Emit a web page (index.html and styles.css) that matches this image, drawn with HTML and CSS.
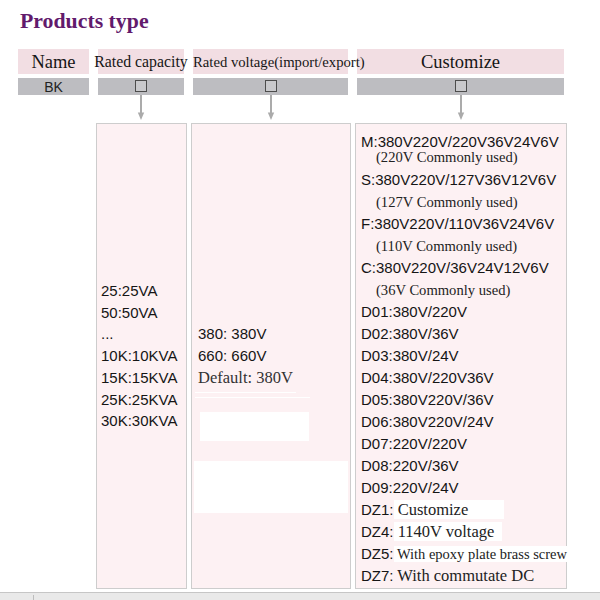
FILE: index.html
```html
<!DOCTYPE html>
<html>
<head>
<meta charset="utf-8">
<link rel="stylesheet" href="styles.css">
</head>
<body>
<div class="page">
  <h1 class="title">Products type</h1>
  <div class="table">
    <div class="hd hd-name">Name</div>
    <div class="hd hd-cap">Rated capacity</div>
    <div class="hd hd-volt">Rated voltage(import/export)</div>
    <div class="hd hd-name">Customize</div>

    <div class="bar">BK</div>
    <div class="bar"><span class="chk"></span></div>
    <div class="bar"><span class="chk"></span></div>
    <div class="bar"><span class="chk"></span></div>

    <div></div>
    <div class="arrow"><svg width="10" height="26" viewBox="0 0 10 26"><path d="M5 0V19" stroke="#ababab" stroke-width="2"/><path d="M1.8 17.5 5 25 8.2 17.5Z" fill="#ababab"/></svg></div>
    <div class="arrow"><svg width="10" height="26" viewBox="0 0 10 26"><path d="M5 0V19" stroke="#ababab" stroke-width="2"/><path d="M1.8 17.5 5 25 8.2 17.5Z" fill="#ababab"/></svg></div>
    <div class="arrow"><svg width="10" height="26" viewBox="0 0 10 26"><path d="M5 0V19" stroke="#ababab" stroke-width="2"/><path d="M1.8 17.5 5 25 8.2 17.5Z" fill="#ababab"/></svg></div>

    <div></div>
    <div class="cell col1">
      <div>25:25VA</div>
      <div>50:50VA</div>
      <div>...</div>
      <div>10K:10KVA</div>
      <div>15K:15KVA</div>
      <div>25K:25KVA</div>
      <div>30K:30KVA</div>
    </div>
    <div class="cell col2">
      <div></div>
      <div class="vtext">
        <div>380: 380V</div>
        <div>660: 660V</div>
        <div class="serif">Default: 380V</div>
      </div>
      <div class="blanks">
        <div class="ln1"></div>
        <div class="ln2"></div>
        <div class="rect-a"></div>
        <div class="rect-b"></div>
      </div>
    </div>
    <div class="cell col3">
      <div>M:380V220V/220V36V24V6V</div>
      <div class="sub first">(220V Commonly used)</div>
      <div class="m2">S:380V220V/127V36V12V6V</div>
      <div class="sub">(127V Commonly used)</div>
      <div>F:380V220V/110V36V24V6V</div>
      <div class="sub">(110V Commonly used)</div>
      <div>C:380V220V/36V24V12V6V</div>
      <div class="sub">(36V Commonly used)</div>
      <div>D01:380V/220V</div>
      <div>D02:380V/36V</div>
      <div>D03:380V/24V</div>
      <div>D04:380V/220V36V</div>
      <div>D05:380V220V/36V</div>
      <div>D06:380V220V/24V</div>
      <div>D07:220V/220V</div>
      <div>D08:220V/36V</div>
      <div>D09:220V/24V</div>
      <div>DZ1:<span class="w w1"> Customize</span></div>
      <div>DZ4:<span class="w w2"> 1140V voltage</span></div>
      <div>DZ5:<span class="w w3 small"> With epoxy plate brass screw</span></div>
      <div>DZ7:<span class="s"> With commutate DC</span></div>
    </div>
  </div>
  <div class="status"><div class="status-sep"></div></div>
</div>
</body>
</html>
```
FILE: styles.css
```css
html, body {
  margin: 0;
  padding: 0;
  background: #ffffff;
}
body {
  font-family: "Liberation Sans", Arial, sans-serif;
  color: #1c1c1c;
}
.page {
  width: 600px;
  height: 600px;
  overflow: hidden;
}
.title {
  margin: 0;
  padding: 11px 0 0 20px;
  font-family: "Liberation Serif", "Times New Roman", serif;
  font-weight: bold;
  font-size: 21.8px;
  line-height: 21.5px;
  height: 21.5px;
  color: #621a6c;
}
.table {
  display: grid;
  grid-template-columns: 71px 86px 155px 207px;
  grid-template-rows: 25px 21px 28px 466px;
  column-gap: 9px;
  margin: 16.5px 0 0 18px;
}
.hd {
  background: #f2dee3;
  font-family: "Liberation Serif", "Times New Roman", serif;
  color: #161616;
  white-space: nowrap;
  display: flex;
  justify-content: center;
  align-items: center;
  padding-top: 1px;
  box-sizing: border-box;
}
.hd-name {
  font-size: 18.5px;
}
.hd-cap {
  font-size: 15.8px;
}
.hd-volt {
  font-size: 14.7px;
  justify-content: flex-start;
  position: relative;
  z-index: 1;
}
.bar {
  background: #bdbdc1;
  margin-top: 4px;
  display: flex;
  justify-content: center;
  align-items: center;
  font-size: 14px;
  color: #222;
}
.chk {
  width: 12px;
  height: 12px;
  box-sizing: border-box;
  border: 1.5px solid #4d4d4d;
  background: #c9c9cc;
  margin-top: -2px;
}
.arrow {
  display: flex;
  justify-content: center;
}
.arrow svg {
  display: block;
}
.cell {
  margin: 0 -3px 0 -2px;
  border: 1px solid #cdcdcd;
  background: #fdf1f3;
  font-size: 15px;
  white-space: nowrap;
  color: #151515;
}
.col1 {
  display: flex;
  flex-direction: column;
  justify-content: center;
  padding-left: 4px;
  line-height: 21.7px;
}
.col2 {
  display: grid;
  grid-template-rows: 1fr auto 1fr;
  padding-left: 6px;
  line-height: 21.7px;
}
.col2 .serif {
  font-family: "Liberation Serif", "Times New Roman", serif;
  font-size: 16.5px;
  color: #333;
}
.blanks {
  display: flex;
  flex-direction: column;
  align-items: flex-start;
}
.blanks > div {
  background: #ffffff;
}
.ln1 {
  height: 1px;
  width: 101px;
  margin: 3.5px 0 0 -3px;
}
.ln2 {
  height: 1px;
  width: 115px;
  margin: 4px 0 0 -3px;
}
.rect-a {
  width: 109px;
  height: 29px;
  margin: 14px 0 0 2px;
}
.rect-b {
  width: 154px;
  height: 52px;
  margin: 20px 0 0 -4px;
}
.col3 {
  padding: 7px 0 0 5px;
  line-height: 22px;
}
.m2 {
  margin-top: 1px;
}
.sub {
  font-family: "Liberation Serif", "Times New Roman", serif;
  font-size: 14.6px;
  padding-left: 15px;
  color: #222;
}
.sub.first {
  margin-top: -7px;
}
.w, .s {
  font-family: "Liberation Serif", "Times New Roman", serif;
  font-size: 16.5px;
  line-height: 16px;
  color: #222;
}
.w {
  background: #ffffff;
}
.w1 {
  padding-right: 36px;
}
.w2 {
  padding-right: 8px;
}
.small {
  font-size: 14.5px;
}
.status {
  margin-top: 3px;
  height: 8px;
  border-top: 1px solid #c6c6c6;
  background: #e9e9e9;
  display: flex;
}
.status-sep {
  width: 33px;
  border-right: 1px solid #bdbdbd;
  margin-top: 2px;
}
```
